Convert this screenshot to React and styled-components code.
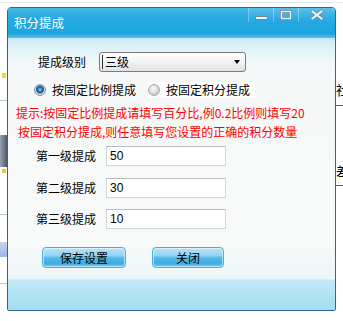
import React, { useState } from 'react';
import styled, { createGlobalStyle } from 'styled-components';

const GlobalStyle = createGlobalStyle`
  html, body {
    margin: 0;
    padding: 0;
    background: #ffffff;
  }
  body {
    font-family: "Noto Sans CJK SC", "Liberation Sans", sans-serif;
    font-size: 12px;
  }
`;

const Page = styled.div`
  width: 343px;
  height: 321px;
  display: grid;
  grid-template-columns: 7px 329px 7px;
  grid-template-rows: 7px 304px 10px;
  background: #ffffff;
  overflow: hidden;
`;

const TopBand = styled.div`
  grid-column: 1 / -1;
  padding-top: 2px;
`;

const TopLine = styled.div`
  height: 1px;
  background: #e6e8ea;
`;

const Strip = styled.div`
  grid-row: 2 / 4;
  display: flex;
  flex-direction: column;
  overflow: hidden;
`;

const Mark = styled.div`
  margin-top: ${p => p.top}px;
  margin-left: ${p => p.left || 0}px;
  width: ${p => p.w || 7}px;
  height: ${p => p.h}px;
  background: ${p => p.bg};
  flex-shrink: 0;
`;

const Clipped = styled.div`
  margin-top: ${p => p.top}px;
  height: 15px;
  font-size: 13px;
  line-height: 15px;
  color: #000;
  white-space: nowrap;
  flex-shrink: 0;
`;

const Dialog = styled.div`
  grid-row: 2;
  grid-column: 2;
  box-sizing: border-box;
  border: 1px solid #2b6b8d;
  border-radius: 4px 4px 2px 2px;
  display: flex;
  flex-direction: column;
  overflow: hidden;
`;

const TitleBar = styled.div`
  height: 30px;
  flex-shrink: 0;
  display: flex;
  align-items: flex-start;
  background: linear-gradient(#44b6e7 0%, #27a9e1 35%, #1ca4de 85%, #5cc0e9 100%);
`;

const Title = styled.div`
  flex: 1;
  padding-left: 6px;
  line-height: 30px;
  color: #ffffff;
  font-size: 12.5px;
`;

const Controls = styled.div`
  display: flex;
  height: 14px;
  border-left: 1px solid rgba(255, 255, 255, 0.35);
`;

const ControlButton = styled.div`
  width: ${p => p.w}px;
  height: 14px;
  display: flex;
  align-items: center;
  justify-content: center;
  border-right: ${p => (p.last ? 'none' : '1px solid rgba(255, 255, 255, 0.35)')};
  background: linear-gradient(rgba(255, 255, 255, 0.12), rgba(255, 255, 255, 0));
`;

const Body = styled.div`
  flex: 1;
  display: flex;
  flex-direction: column;
  background: linear-gradient(
    #c3e8f6 0px,
    #dcf1f8 8px,
    #eff7f9 22px,
    #f6f8f8 38px,
    #f8f9f9 205px,
    #ebf6fa 241px,
    #c2e9f8 242px,
    #a4dcf2 272px
  );
`;

const SelectRow = styled.div`
  margin-top: 14px;
  height: 20px;
  padding-left: 30px;
  display: flex;
  align-items: center;
  gap: 14px;
`;

const Label = styled.span`
  color: #000;
  font-size: 12px;
  line-height: 20px;
  width: ${p => p.w}px;
  white-space: nowrap;
`;

const SelectBox = styled.div`
  box-sizing: border-box;
  width: 147px;
  height: 20px;
  border: 1px solid #7d7d7d;
  border-radius: 3px;
  background: linear-gradient(#ffffff 0%, #f3f3f3 50%, #e2e2e2 100%);
  display: flex;
  align-items: center;
  justify-content: space-between;
  padding: 0 5px 0 2px;
`;

const SelectValue = styled.span`
  border-left: 1px solid #333;
  padding-left: 2px;
  line-height: 14px;
  color: #000;
`;

const Arrow = styled.div`
  width: 0;
  height: 0;
  border-left: 3.5px solid transparent;
  border-right: 3.5px solid transparent;
  border-top: 4px solid #000;
`;

const RadioRow = styled.div`
  margin-top: 10px;
  height: 16px;
  padding-left: 26px;
  display: flex;
  align-items: center;
`;

const RadioOption = styled.label`
  display: flex;
  align-items: center;
  gap: 6px;
  height: 16px;
  padding-right: 5px;
  margin-right: ${p => (p.gap ? p.gap : 0)}px;
  background: ${p => (p.plain ? 'transparent' : '#ffffff')};
  cursor: pointer;
`;

const RadioDot = styled.span`
  box-sizing: border-box;
  width: 12px;
  height: 12px;
  border-radius: 50%;
  border: 1px solid ${p => (p.checked ? '#8a949c' : '#a9acae')};
  background: ${p =>
    p.checked
      ? 'radial-gradient(circle at 50% 45%, #8fd3f7 0px, #2f86c4 2px, #134f85 3.5px, #dfe3e6 4.5px, #b9bec2 6px)'
      : 'radial-gradient(circle at 45% 40%, #fbfbfb 0px, #e6e6e6 3px, #c4c4c4 6px)'};
`;

const RadioText = styled.span`
  color: #000;
  line-height: 16px;
`;

const Hint = styled.div`
  margin-top: 5px;
  padding-left: 8px;
  color: #ff0000;
  font-size: 12px;
  line-height: 19px;
`;

const HintLine = styled.div`
  padding-left: ${p => p.indent || 0}px;
  white-space: nowrap;
`;

const FieldRow = styled.div`
  margin-top: ${p => p.top}px;
  height: 20px;
  padding-left: 28px;
  display: flex;
  align-items: center;
  gap: 10px;
`;

const TextInput = styled.input`
  box-sizing: border-box;
  width: 120px;
  height: 20px;
  border: 1px solid #cfd6dc;
  border-top-color: #b4bcc4;
  background: #ffffff;
  padding: 0 3px;
  font-family: "Liberation Sans", sans-serif;
  font-size: 12px;
  color: #000;
  outline: none;
`;

const ButtonRow = styled.div`
  margin-top: 18px;
  padding-left: 34px;
  display: flex;
  gap: 26px;
`;

const Button = styled.button`
  box-sizing: border-box;
  width: ${p => p.w}px;
  height: 21px;
  padding: 0;
  border: 1px solid #4aaee2;
  border-radius: 4px;
  box-shadow: inset 0 0 0 1px rgba(255, 255, 255, 0.55);
  background: linear-gradient(
    #b9e3f8 0%,
    #93d3f3 40%,
    #55b8e8 52%,
    #3eaee3 80%,
    #6fc6ee 100%
  );
  font-family: "Noto Sans CJK SC", sans-serif;
  font-size: 12px;
  line-height: 19px;
  color: #000;
  cursor: pointer;
`;

const MinIcon = () => (
  <svg width="13" height="12" viewBox="0 0 13 12">
    <rect x="0.5" y="7.5" width="12" height="3" fill="#edf3f6" stroke="#6d8799" strokeWidth="1" />
  </svg>
);

const MaxIcon = () => (
  <svg width="12" height="10" viewBox="0 0 12 10">
    <rect x="1.5" y="1.5" width="9" height="7" fill="none" stroke="#6d8799" strokeWidth="3" />
    <rect x="1.5" y="1.5" width="9" height="7" fill="none" stroke="#edf3f6" strokeWidth="1.4" />
  </svg>
);

const CloseIcon = () => (
  <svg width="12" height="10" viewBox="0 0 12 10">
    <path d="M1.5 1.5 L10.5 8.5 M10.5 1.5 L1.5 8.5" stroke="#6d8799" strokeWidth="3.6" strokeLinecap="square" />
    <path d="M1.5 1.5 L10.5 8.5 M10.5 1.5 L1.5 8.5" stroke="#edf3f6" strokeWidth="2" strokeLinecap="square" />
  </svg>
);

const levels = [
  { label: '第一级提成', value: '50', top: 4.5 },
  { label: '第二级提成', value: '30', top: 12 },
  { label: '第三级提成', value: '10', top: 11 },
];

export default function App() {
  const [mode, setMode] = useState('ratio');
  const [values, setValues] = useState(levels.map(l => l.value));

  return (
    <>
      <GlobalStyle />
      <Page>
        <TopBand>
          <TopLine />
        </TopBand>

        <Strip>
          <Mark top={66} left={2} w={4} h={5} bg="#f2d445" />
          <Mark top={22} h={1} bg="#b6c6d6" />
          <Mark top={34} h={32} bg="linear-gradient(90deg, #9aa4b1, #4d596b)" />
          <Mark top={2} left={2} w={4} h={4} bg="#e8c63a" />
          <Mark top={41} h={1} bg="#b6c6d6" />
          <Mark top={27} h={15} bg="linear-gradient(#c4d4ee, #9db6e2)" />
          <Mark top={26} h={1} bg="#b6c6d6" />
        </Strip>

        <Dialog>
          <TitleBar>
            <Title>积分提成</Title>
            <Controls>
              <ControlButton w={24}><MinIcon /></ControlButton>
              <ControlButton w={24}><MaxIcon /></ControlButton>
              <ControlButton w={36} last><CloseIcon /></ControlButton>
            </Controls>
          </TitleBar>

          <Body>
            <SelectRow>
              <Label w={47}>提成级别</Label>
              <SelectBox>
                <SelectValue>三级</SelectValue>
                <Arrow />
              </SelectBox>
            </SelectRow>

            <RadioRow>
              <RadioOption plain gap={7} onClick={() => setMode('ratio')}>
                <RadioDot checked={mode === 'ratio'} />
                <RadioText>按固定比例提成</RadioText>
              </RadioOption>
              <RadioOption onClick={() => setMode('fixed')}>
                <RadioDot checked={mode === 'fixed'} />
                <RadioText>按固定积分提成</RadioText>
              </RadioOption>
            </RadioRow>

            <Hint>
              <HintLine>提示:按固定比例提成请填写百分比,例0.2比例则填写20</HintLine>
              <HintLine indent={2}>按固定积分提成,则任意填写您设置的正确的积分数量</HintLine>
            </Hint>

            {levels.map((level, i) => (
              <FieldRow key={level.label} top={level.top}>
                <Label w={60}>{level.label}</Label>
                <TextInput
                  value={values[i]}
                  onChange={e => {
                    const next = [...values];
                    next[i] = e.target.value;
                    setValues(next);
                  }}
                />
              </FieldRow>
            ))}

            <ButtonRow>
              <Button w={84}>保存设置</Button>
              <Button w={72}>关闭</Button>
            </ButtonRow>
          </Body>
        </Dialog>

        <Strip>
          <Clipped top={75}>社</Clipped>
          <Mark top={8} h={1} bg="#2f6e9b" />
          <Clipped top={57}>差</Clipped>
          <Mark top={7} h={1} bg="#2f6e9b" />
        </Strip>
      </Page>
    </>
  );
}
